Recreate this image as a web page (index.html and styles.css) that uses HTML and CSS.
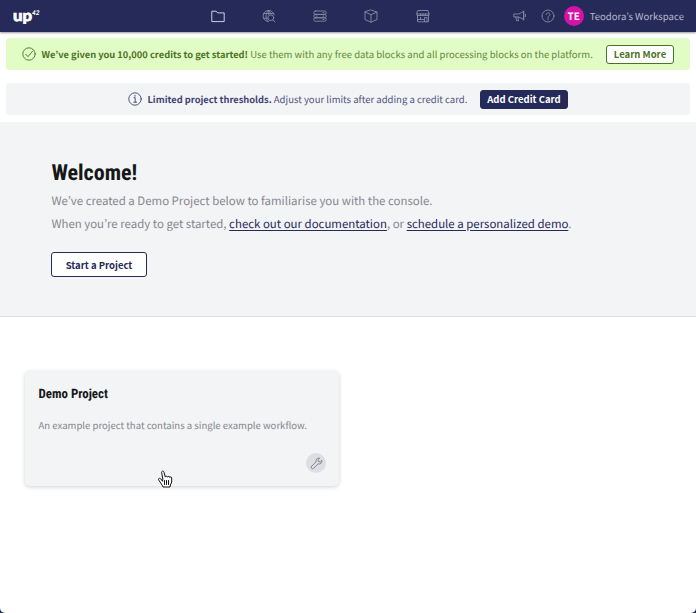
FILE: index.html
```html
<!DOCTYPE html>
<html lang="en">
<head>
<meta charset="utf-8">
<title>UP42 Console</title>
<link rel="stylesheet" href="styles.css">
</head>
<body>
<div class="window">
  <header class="topbar">
    <a class="logo" aria-label="up42"><span class="logo-up">up</span><span class="logo-num">42</span></a>
    <nav class="nav">
      <svg class="icon active" viewBox="0 0 14 14"><path d="M.8 12.2V2.2h4.4l1.4 1.7h6.6v8.3z"/></svg>
      <svg class="icon" viewBox="0 0 14 14"><path d="M6.2 12.600A5.600 5.600 0 1 1 12.200 6M1.500 4.500h10.200M1.500 9.200h4M6.500 1.500C3.300 4 3.300 9.500 5.800 12.300M6.500 1.500c1.300 1 2 2.300 2.300 3.500M6.700 1.500v4"/><circle cx="8.800" cy="8.800" r="2.900"/><path d="M11 11l2 2"/></svg>
      <svg class="icon" viewBox="0 0 14 14"><rect x=".8" y="2" width="12.400" height="3.400" rx="1.500"/><rect x=".8" y="5.400" width="12.400" height="3.400" rx="1.500"/><rect x=".8" y="8.800" width="12.400" height="3.400" rx="1.500"/><path d="M3 7.100h1M10 3.700h1M10 7.100h1M10 10.500h1"/></svg>
      <svg class="icon" viewBox="0 0 14 14"><path d="M7 1l6 2v7.6L7 13.2 1 10.600V3zM1 3l6 2.700L13 3M7 5.700v7.500"/></svg>
      <svg class="icon" viewBox="0 0 14 14"><path d="M2 1.500h10l1 3.500H1zM1 5v1.500h12V5M4.500 5v1.500M7 5v1.500M9.500 5v1.500M1.500 6.500v6.300h11V6.500M1.500 10.500h6.500M4.500 8.500v2M8.500 12.800V8.500h2.500v4.300"/></svg>
    </nav>
    <div class="account">
      <svg class="icon horn" viewBox="0 0 14 14"><path d="M1.200 5h4.500l5-2.500v8l-5-2.500H1.200zM10.700 2v9M12.500 5.500v2M2.800 8l.7 3.800h2L5 8"/></svg>
      <svg class="icon help" viewBox="0 0 14 14"><circle cx="7" cy="7" r="6"/><path d="M5.200 5.600c0-2.400 3.700-2.300 3.700-.1C8.900 7 7 6.700 7 8.400M7 9.700v1"/></svg>
      <span class="avatar">TE</span>
      <span class="workspace">Teodora’s Workspace</span>
    </div>
  </header>

  <div class="notice credits">
    <svg class="notice-icon" viewBox="0 0 14 14"><circle cx="7" cy="7" r="6.200"/><path d="M3.700 7.200l2.200 2.500 4.500-5.300"/></svg>
    <p><b>We’ve given you 10,000 credits to get started!</b> <span>Use them with any free data blocks and all processing blocks on the platform.</span></p>
    <button class="btn btn-green">Learn More</button>
  </div>

  <div class="notice limits">
    <svg class="notice-icon" viewBox="0 0 14 14"><circle cx="7" cy="7" r="6.200"/><path d="M6 5.700h1.200v4.400M5.800 10.200h2.800M7 3.300v1"/></svg>
    <p><b>Limited project thresholds.</b> <span>Adjust your limits after adding a credit card.</span></p>
    <button class="btn btn-navy">Add Credit Card</button>
  </div>

  <section class="hero">
    <h1>Welcome!</h1>
    <p class="line1">We’ve created a Demo Project below to familiarise you with the console.</p>
    <p class="line2">When you’re ready to get started, <a>check out our documentation</a>, or <a>schedule a personalized demo</a>.</p>
    <button class="btn btn-start">Start a Project</button>
  </section>

  <main class="projects">
    <article class="card">
      <h2>Demo Project</h2>
      <p>An example project that contains a single example workflow.</p>
      <span class="tool"><svg viewBox="0 0 14 14"><path d="M1.500 10.300l5-5C6 3 7.500.9 10.300 1.100L8.700 3l.4 1.900 1.900.4 1.900-1.600c.3 2.700-2 4.300-4.200 3.700l-5 5c-1.500 1-3.200-.7-2.200-2.100z"/></svg></span>
      <svg class="cursor" viewBox="0 0 16 18"><path d="M5.300 11L3.800 8.900C2.700 7.700.9 8.500 1.700 10l3.500 5.200.8 1.800h7l.4-2 1.300-3V7.800c-.2-1.300-1.700-1.200-1.900-.3-.1-1.400-2-1.500-2.200-.3-.2-1.300-2-1.300-2.300-.1L7 2.200C6.500.5 4.300.9 4.600 2.600l1.200 6z"/><path d="M7.500 10.500v4M9.500 10.500v4M11.500 10.500v4"/></svg>
    </article>
  </main>
</div>
</body>
</html>
```

FILE: styles.css
```css
* { box-sizing: border-box; }
html { background: #17304f; }
body {
  margin: 0;
  font-family: "Noto Sans CJK KR", "Noto Sans", sans-serif;
  text-rendering: geometricPrecision;
}
h1, h2, p { margin: 0; }
p, span, a, button { white-space: nowrap; }
svg { fill: none; stroke: currentColor; stroke-linecap: round; stroke-linejoin: round; flex: none; }

.window { height: 613px; background: #fff; border-radius: 0 0 5px 5px; overflow: hidden; }

.topbar {
  height: 32px;
  display: flex;
  align-items: center;
  justify-content: space-between;
  padding: 0 12px 0 13px;
  background: #262a59;
  box-shadow: 0 1px 2px rgba(0, 0, 0, .4);
  color: #858aa5;
}
.logo { display: flex; width: 197.5px; color: #fff; font-family: Lato, sans-serif; font-weight: 900; line-height: 15px; }
.logo-up { width: 19px; font-size: 15.5px; -webkit-text-stroke: .7px #fff; transform: scaleX(1.08); transform-origin: left; }
.logo-num { font-size: 6.5px; line-height: 9px; font-style: italic; }
.nav { display: flex; gap: 37.3px; }
.icon { width: 14px; height: 14px; stroke-width: .9; }
.icon.active { color: #e0e1ea; }
.account { display: flex; align-items: center; margin-left: auto; }
.help { margin-left: 14px; }
.avatar {
  width: 20px; height: 20px; margin: 0 6px 0 9px; border-radius: 50%;
  background: #d611a7; color: #fff; font-size: 10px; font-weight: 700; line-height: 20px; text-align: center;
}
.workspace { font-size: 9.6px; line-height: 20px; color: #b7b9cc; }

.notice {
  height: 32px;
  margin: 6px 6px 0;
  display: flex;
  align-items: center;
  border-radius: 4px;
  font-size: 9.55px;
  line-height: 16px;
}
.notice p { margin-top: -1px; }
.notice b { font-size: 9.3px; }
.notice-icon { width: 14px; height: 14px; stroke-width: .9; margin-right: 6px; }
.credits { padding-left: 15.5px; background: #e1fcc5; color: #4d7326; }
.credits span { color: #66883f; }
.limits { margin-top: 13px; padding-left: 121.5px; background: #f3f4f6; color: #3f4273; }
.limits span { color: #50537f; }

.btn {
  height: 19px; padding: 0; border-radius: 3px; border: 1px solid;
  font: 700 9.5px/15px "Noto Sans CJK KR", sans-serif; background: #fff;
}
.btn-green { width: 68px; margin-left: auto; margin-right: 16px; color: #4d7326; }
.btn-navy { width: 88px; margin-left: auto; margin-right: 122px; background: #262a59; border-color: #262a59; color: #fff; }

.hero { height: 195px; margin-top: 7px; padding: 35px 51.4px 0; background: #f3f4f6; border-bottom: 1px solid #dcdee3; color: #85878f; font-size: 11.45px; }
h1, h2 { font-family: "Roboto Condensed", Roboto, sans-serif; font-stretch: 75%; color: #151719; }
h1 { font-size: 22px; line-height: 33px; }
.hero p { line-height: 23px; }
.hero a { color: #262a59; text-decoration: underline; text-underline-offset: 2px; }
.btn-start { display: block; width: 96px; height: 25px; margin: 16px 0 0 -.4px; line-height: 22px; color: #262a59; }

.projects { padding: 54px 25px; }
.card {
  position: relative; width: 314px; height: 115px; padding: 14px 13px 13px 13.5px;
  display: flex; flex-direction: column;
  border-radius: 5px; background: #f3f4f6; box-shadow: 0 1px 4px rgba(0, 0, 0, .18);
}
h2 { font-size: 12.9px; line-height: 20px; }
.card p { margin-top: 12px; font-size: 9.57px; line-height: 16px; color: #85878f; }
.tool { display: grid; place-items: center; width: 20px; height: 20px; margin: auto 0 0 auto; border-radius: 50%; background: #dddee3; color: #747780; }
.tool svg { width: 13px; height: 13px; stroke-width: .9; }
.cursor { position: absolute; left: 132px; top: 99px; width: 16px; height: 18px; fill: #fff; color: #111; }
```
